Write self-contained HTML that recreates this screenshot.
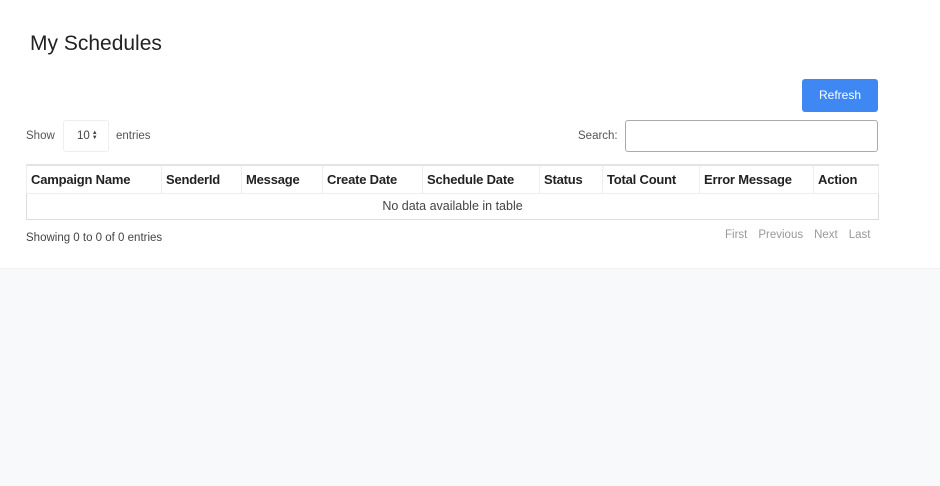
<!DOCTYPE html>
<html><head><style>
*{box-sizing:border-box}
body{margin:0;width:940px;height:486px;background:#f8f9fb;font-family:"Liberation Sans",sans-serif;overflow:hidden}
.top{background:#fff;height:269px;border-bottom:1px solid #eef0f4;position:relative}
h1{position:absolute;left:30px;top:32px;margin:0;font-weight:400;font-size:21px;color:#222}
.btn{position:absolute;left:802px;top:79px;width:76px;height:33px;background:#3f88f4;border-radius:3px;color:#fff;font-size:12px;text-align:center;line-height:33px}
.show{position:absolute;left:26px;top:130px;font-size:11.5px;color:#555}
.sel{position:absolute;left:63px;top:120px;width:46px;height:32px;border:1px solid #eee;border-radius:3px;font-size:11.5px;color:#444;line-height:30px;padding-left:13px}
.ar{display:inline-block;vertical-align:middle;font-size:6px;line-height:5px;margin-left:2px}
.ent{position:absolute;left:116px;top:130px;font-size:11.5px;color:#555}
.sl{position:absolute;left:578px;top:130px;font-size:11.5px;color:#555}
.inp{position:absolute;left:625px;top:120px;width:253px;height:32px;border:1px solid #aaa;border-radius:3px}
table{position:absolute;left:26px;top:164px;width:852px;border-collapse:collapse;table-layout:fixed;border:1px solid #ddd}
th{height:28px;border:1px solid #eee;border-top:2px solid #e4e4e4;text-align:left;font-size:13px;color:#222;padding:1px 0 0 4px;font-weight:bold;white-space:nowrap;overflow:hidden;letter-spacing:-0.2px}
td{height:26px;text-align:center;font-size:12.5px;color:#444}
.info{position:absolute;left:26px;top:232px;font-size:11.5px;color:#444}
.pg{position:absolute;left:725px;top:229px;font-size:11.5px;color:#999}
.pg span{margin-right:11px}
</style></head><body>
<div class="top">
<h1>My Schedules</h1>
<div class="btn">Refresh</div>
<div class="show">Show</div>
<div class="sel">10<span class="ar">&#9650;<br>&#9660;</span></div>
<div class="ent">entries</div>
<div class="sl">Search:</div>
<div class="inp"></div>
<table>
<colgroup><col style="width:135px"><col style="width:80px"><col style="width:81px"><col style="width:100px"><col style="width:117px"><col style="width:63px"><col style="width:97px"><col style="width:114px"><col style="width:65px"></colgroup>
<tr><th>Campaign Name</th><th>SenderId</th><th>Message</th><th>Create Date</th><th>Schedule Date</th><th>Status</th><th>Total Count</th><th>Error Message</th><th>Action</th></tr>
<tr><td colspan="9">No data available in table</td></tr>
</table>
<div class="info">Showing 0 to 0 of 0 entries</div>
<div class="pg"><span>First</span><span>Previous</span><span>Next</span><span>Last</span></div>
</div>
</body></html>
